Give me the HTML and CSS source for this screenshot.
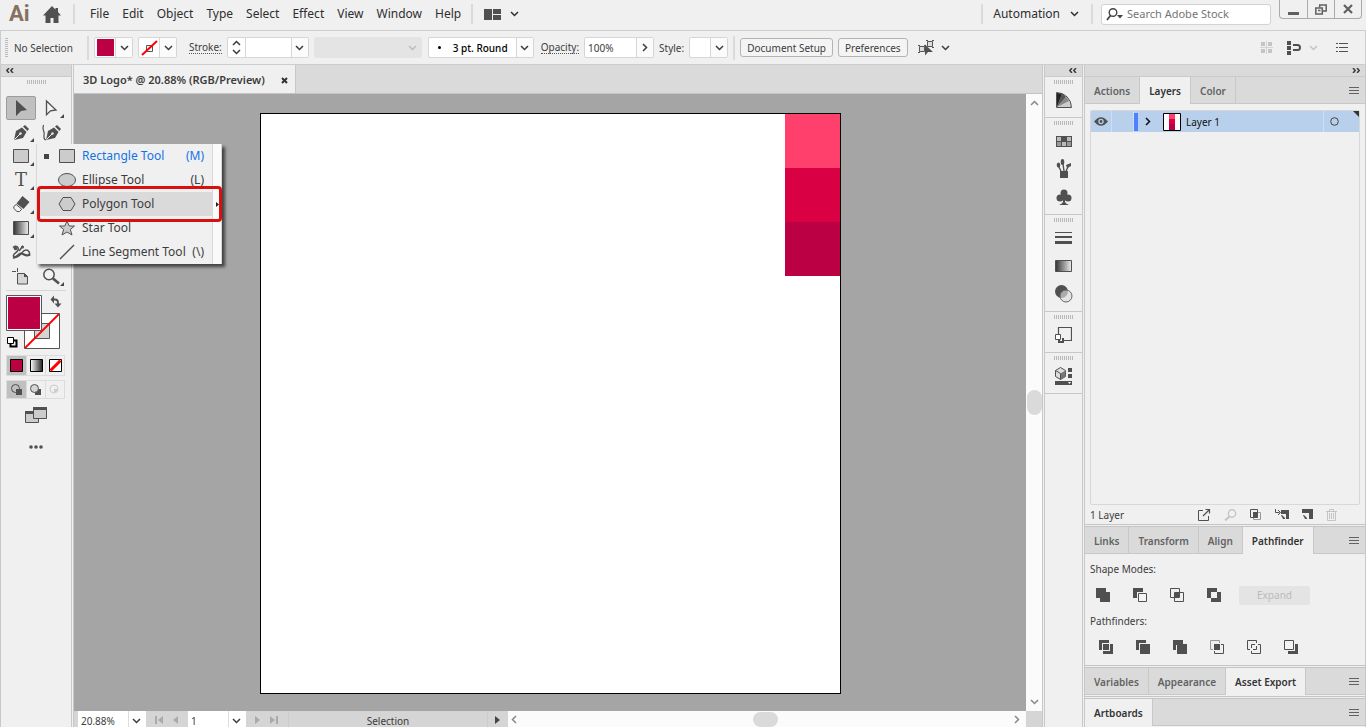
FILE: index.html
```html
<!DOCTYPE html>
<html lang="en">
<head>
<meta charset="utf-8">
<title>3D Logo</title>
<link rel="stylesheet" href="styles.css">
</head>
<body>
<svg class="defs" aria-hidden="true">
  <defs>
    <symbol id="down" viewBox="0 0 9 6"><path d="M1 1l3.500 3.500L8 1" fill="none" stroke="currentColor" stroke-width="1.500"/></symbol>
    <symbol id="up" viewBox="0 0 9 6"><path d="M1 5l3.500-3.500L8 5" fill="none" stroke="currentColor" stroke-width="1.500"/></symbol>
    <symbol id="right" viewBox="0 0 6 9"><path d="M1 1l3.500 3.500L1 8" fill="none" stroke="currentColor" stroke-width="1.500"/></symbol>
    <symbol id="left" viewBox="0 0 6 9"><path d="M5 1L1.500 4.500L5 8" fill="none" stroke="currentColor" stroke-width="1.500"/></symbol>
    <symbol id="fold" viewBox="0 0 8 5"><path d="M3 0L.8 2.500L3 5M7 0L4.800 2.500L7 5" fill="none" stroke="currentColor" stroke-width="1.500"/></symbol>
    <symbol id="lines" viewBox="0 0 10 8"><path d="M0 .5h10M0 3.500h10M0 6.500h10" stroke="currentColor"/></symbol>
    <linearGradient id="ramp"><stop offset="0" stop-color="#333"/><stop offset="1" stop-color="#eee"/></linearGradient>
    <linearGradient id="ramp2"><stop offset="0" stop-color="#fff"/><stop offset="1" stop-color="#222"/></linearGradient>
  </defs>
</svg>

<header class="menubar">
  <span class="brand">Ai</span>
  <button class="plain home" aria-label="Home"><svg width="18" height="17" viewBox="0 0 18 17"><path d="M9 0l3.500 3.500V2H15v4l3 3.500h-2.500V17h-5v-5h-3v5h-5V9.500H0z" fill="#505050"/></svg></button>
  <i class="sep"></i>
  <nav class="menus">
    <button class="plain">File</button><button class="plain">Edit</button><button class="plain">Object</button><button class="plain">Type</button><button class="plain">Select</button><button class="plain">Effect</button><button class="plain">View</button><button class="plain">Window</button><button class="plain">Help</button>
  </nav>
  <i class="sep"></i>
  <button class="plain workspace" aria-label="Arrange documents"><svg width="17" height="11"><path d="M0 0h8v11H0zM9 0h8v5H9zM9 6h8v5H9z" fill="#505050"/></svg><svg width="9" height="6"><use href="#down"/></svg></button>
  <span class="grow"></span>
  <i class="sep"></i>
  <button class="plain automation">Automation <svg width="9" height="6"><use href="#down"/></svg></button>
  <i class="sep"></i>
  <label class="search"><svg width="18" height="13"><circle cx="7" cy="4.500" r="3.800" fill="none" stroke="#444" stroke-width="1.400"/><path d="M4.500 7.500L1 12" stroke="#444" stroke-width="1.800"/><path d="M11 7h6l-3 3.500z" fill="#444"/></svg><input type="text" aria-label="Search Adobe Stock" placeholder="Search Adobe Stock"></label>
  <div class="winbtns">
    <button aria-label="Minimize"><svg width="11" height="11"><path d="M0 8h11v3H0z" fill="#606060"/></svg></button><button aria-label="Restore"><svg width="12" height="11" fill="none" stroke="#606060" stroke-width="1.500"><path d="M4.700 3.500V1h6.500v6H8"/><path d="M.8 4h6.500v6H.8z"/><path d="M3 6.500h2.500"/></svg></button><button aria-label="Close"><svg width="10" height="10"><path d="M1 1l8 8M9 1L1 9" stroke="#606060" stroke-width="2.200"/></svg></button>
  </div>
</header>

<section class="control">
  <i class="grip-v"></i>
  <span class="state">No Selection</span>
  <i class="sep"></i>
  <div class="combo"><button class="chip" aria-label="Fill"><i class="swatch"></i></button><button class="arrow" aria-label="Fill menu"><svg width="9" height="6"><use href="#down"/></svg></button></div>
  <div class="combo"><button class="chip" aria-label="Stroke"><svg width="19" height="18"><path d="M6.500 6.500h6v6h-6z" fill="#fff" stroke="#555"/><path d="M2 16L17 2" stroke="#f00" stroke-width="2"/></svg></button><button class="arrow" aria-label="Stroke menu"><svg width="9" height="6"><use href="#down"/></svg></button></div>
  <label class="link stroke-label" for="weight">Stroke:</label>
  <div class="combo weight"><button class="spin" aria-label="Step"><svg width="9" height="6"><use href="#up"/></svg><svg width="9" height="6"><use href="#down"/></svg></button><input id="weight" type="text"><button class="arrow" aria-label="Weights"><svg width="9" height="6"><use href="#down"/></svg></button></div>
  <button class="profile" disabled aria-label="Width profile"><svg width="9" height="6"><use href="#down"/></svg></button>
  <div class="combo brush"><button class="value"><i></i>3 pt. Round</button><button class="arrow" aria-label="Brushes"><svg width="9" height="6"><use href="#down"/></svg></button></div>
  <label class="link" for="opacity">Opacity:</label>
  <div class="combo opacity"><input id="opacity" type="text" value="100%"><button class="arrow" aria-label="Opacity slider"><svg width="6" height="9"><use href="#right"/></svg></button></div>
  <span class="style-label">Style:</span>
  <div class="combo"><button class="chip" aria-label="Style"></button><button class="arrow" aria-label="Styles"><svg width="9" height="6"><use href="#down"/></svg></button></div>
  <i class="sep near"></i>
  <button class="btn">Document Setup</button>
  <button class="btn prefs">Preferences</button>
  <button class="plain similar" aria-label="Select similar"><svg width="17" height="16"><g fill="#ddd" stroke="#555"><path d="M1.500 6.500h5v5h-5zM9.500 1.500h5v5h-5z"/></g><path d="M0 5.500h2M0 12.500h2M8 .5h2M14 .5h2M14 7.500h2M6 5.500h2" stroke="#555"/><path d="M7 4.500l8 7.500h-5l-3 3.500z" fill="#505050"/></svg><svg width="9" height="6"><use href="#down"/></svg></button>
  <span class="grow"></span>
  <button class="plain tail" aria-label="Align pixels"><svg width="14" height="14"><path d="M1 1h4v4H1zM8 1h4v4H8zM1 8h4v4H1zM8 8h4v4H8z" fill="#c4c4c4"/><path d="M6.500 0v13M0 6.500h13" stroke="#d4d4d4"/></svg></button>
  <button class="plain tail" aria-label="Snap"><svg width="15" height="14"><path d="M1 0h4v4H1zM1 5h4v4H1zM1 10h4v4H1z" fill="#505050"/><path d="M7 4h4.500a2.500 2.500 0 0 1 0 5H7" fill="none" stroke="#505050" stroke-width="2"/></svg></button>
  <button class="plain tail faint" aria-label="Snap options"><svg width="9" height="6"><use href="#down"/></svg></button>
  <button class="plain tail last" aria-label="Panel menu"><svg width="12" height="9"><path d="M0 .5h2M0 4.500h2M0 8.500h2M3 .5h9M3 4.500h9M3 8.500h9" stroke="#505050"/></svg></button>
</section>

<main class="work">
  <aside class="tools">
    <div class="strip left"><svg width="8" height="5"><use href="#fold"/></svg></div>
    <i class="grip"></i>
    <div class="toolgrid">
      <button class="tool on" aria-label="Selection"><svg width="14" height="19"><path d="M2 1l11 10-6 1-5 5z" fill="#505050"/></svg></button>
      <button class="tool more" aria-label="Direct selection"><svg width="14" height="19"><path d="M2.500 2l9.500 9-5.500.8-4 4z" fill="#f4f4f4" stroke="#505050" stroke-width="1.300"/></svg></button>
      <button class="tool more" aria-label="Pen"><svg width="17" height="17"><path d="M1 16l2-9 6-3.500 4.500 4.500-3.500 6z" fill="#505050"/><path d="M10 2.500L12 1l4 4-1.500 2z" fill="#505050"/><path d="M1.500 15.500L7 10" stroke="#eee"/><circle cx="7.500" cy="9.500" r="1.200" fill="#eee"/></svg></button>
      <button class="tool" aria-label="Curvature"><svg width="21" height="17"><path d="M5 16l2-9 6-3.500 4.500 4.500-3.500 6z" fill="#505050"/><path d="M14 2.500L16 1l4 4-1.500 2z" fill="#505050"/><path d="M5.500 15.500L11 10" stroke="#eee"/><circle cx="11.500" cy="9.500" r="1.200" fill="#eee"/><path d="M5 16C1 15 4 10 3 8S1 5 2.500 1" fill="none" stroke="#505050" stroke-width="1.200"/></svg></button>
      <button class="tool more" aria-label="Rectangle"><svg width="16" height="14"><path d="M.5.5h15v13H.5z" fill="#ccc" stroke="#505050"/></svg></button>
      <button class="tool" aria-label="Paintbrush"></button>
      <button class="tool more glyph" aria-label="Type">T</button>
      <button class="tool" aria-label="Rotate"></button>
      <button class="tool more" aria-label="Eraser"><svg width="17" height="17"><path d="M9.500 0l7 6-6 7-7-5.500z" fill="#505050"/><path d="M3.200 8.500l5.500 4.700L6.500 15.500H4L.8 12.500v-2z" fill="#f4f4f4" stroke="#505050"/></svg></button>
      <button class="tool" aria-label="Scale"></button>
      <button class="tool more" aria-label="Gradient"><svg width="16" height="14"><path d="M.5.5h15v13H.5z" fill="url(#ramp)" stroke="#505050"/></svg></button>
      <button class="tool" aria-label="Eyedropper"></button>
      <button class="tool" aria-label="Puppet warp"><svg width="19" height="14"><path d="M1 2.500C4 0 7 2 6 5S2 8 1.500 10.500 5 13 8 10s3-5 6-5 4 3 3.500 6" fill="none" stroke="#505050" stroke-width="1.500"/><path d="M1 12.500c4 1 5-4 8-4s5 4 8.500 1" fill="none" stroke="#505050" stroke-width="2.200"/><path d="M7 6l4-5" stroke="#505050" stroke-width="1.500"/><circle cx="3.500" cy="3.500" r="1.800" fill="#505050"/><circle cx="10.500" cy="2" r="1.500" fill="#505050"/></svg></button>
      <button class="tool" aria-label="Blend"></button>
      <button class="tool" aria-label="Artboard"><svg width="18" height="17"><path d="M0 3.500h4M5.500 0v4" stroke="#505050"/><path d="M5.500 5.500h7l3 3v7.500h-10z" fill="#d6d6d6" stroke="#505050"/><path d="M12 5v4h4z" fill="#505050"/></svg></button>
      <button class="tool more" aria-label="Zoom"><svg width="18" height="17"><circle cx="7" cy="6.500" r="5.200" fill="#f2f2f2" stroke="#505050" stroke-width="1.500"/><path d="M11 10.500l6 5" stroke="#505050" stroke-width="2.600"/></svg></button>
    </div>
    <hr class="rule">
    <div class="wells">
      <svg width="58" height="54" viewBox="0 0 58 54" role="img" aria-label="Fill and stroke">
        <path d="M18.500 18.500h35v35h-35z" fill="#fff" stroke="#555"/><path d="M28.500 28.500h15v15h-15z" fill="#d5d5d5" stroke="#555"/><path d="M19 53L53 19" stroke="#f00" stroke-width="1.800"/>
        <path d="M.5.5h35v35H.5z" fill="#fff" stroke="#555"/><path d="M2 2h32v32H2z" fill="#bb0043"/>
        <path d="M47 4.500h2q3 0 3 3V9" fill="none" stroke="#505050" stroke-width="1.800"/><path d="M48 .5v8l-3.500-4z M48.500 8.500h7L52 12.500z" fill="#505050"/>
        <path d="M4.500 45.500h6v6h-6z" fill="none" stroke="#000" stroke-width="2"/><path d="M1.500 42.500h6v6h-6z" fill="#fff" stroke="#000"/>
      </svg>
    </div>
    <div class="trio">
      <button class="on" aria-label="Color"><svg width="13" height="13"><path d="M.5.5h12v12H.5z" fill="#bb0043" stroke="#000"/></svg></button>
      <button aria-label="Gradient fill"><svg width="13" height="13"><path d="M.5.5h12v12H.5z" fill="url(#ramp2)" stroke="#000"/></svg></button>
      <button aria-label="None"><svg width="13" height="13"><path d="M.5.5h12v12H.5z" fill="#fff" stroke="#000"/><path d="M1.500 11.500l10-10" stroke="#f00" stroke-width="3"/></svg></button>
    </div>
    <div class="trio draw">
      <button class="on" aria-label="Draw normal"><svg width="12" height="12"><circle cx="4.500" cy="4.500" r="4" fill="none" stroke="#505050"/><path d="M5 5h6v6H5z" fill="#505050"/></svg></button>
      <button aria-label="Draw behind"><svg width="12" height="12"><path d="M5 5h6v6H5z" fill="#505050"/><circle cx="4.500" cy="4.500" r="4" fill="#d5d5d5" stroke="#505050"/></svg></button>
      <button aria-label="Draw inside"><svg width="12" height="12"><circle cx="5" cy="5" r="4" fill="none" stroke="#ccc"/><path d="M5 5h4l-2 3H5z" fill="#ccc"/></svg></button>
    </div>
    <button class="plain screen" aria-label="Screen mode"><svg width="22" height="16"><path d="M.5 5.500h13v10H.5z" fill="#ccc" stroke="#505050"/><path d="M0 4h14v3H0z" fill="#505050"/><path d="M8.500 1.500h13v10h-13z" fill="#ccc" stroke="#505050"/><path d="M8 0h14v3H8z" fill="#505050"/></svg></button>
    <button class="plain dots" aria-label="Edit toolbar"><svg width="14" height="4"><g fill="#505050"><circle cx="2" cy="2" r="1.800"/><circle cx="7" cy="2" r="1.800"/><circle cx="12" cy="2" r="1.800"/></g></svg></button>

    <div class="flyout">
      <div class="items">
        <button class="item current"><i class="mark"></i><svg width="18" height="14"><path d="M1.500.5h15v13h-15z" fill="#ccc" stroke="#505050"/></svg><span>Rectangle Tool</span><kbd>(M)</kbd></button>
        <button class="item"><i class="mark"></i><svg width="18" height="14"><ellipse cx="9" cy="7" rx="8.500" ry="6.500" fill="#ccc" stroke="#505050"/></svg><span>Ellipse Tool</span><kbd>(L)</kbd></button>
        <button class="item hover"><i class="mark"></i><svg width="18" height="14"><path d="M1 7l4-6.500h8L17 7l-4 6.500H5z" fill="#ccc" stroke="#505050"/></svg><span>Polygon Tool</span></button>
        <button class="item"><i class="mark"></i><svg width="18" height="16"><path d="M9 1l2.200 5H16.500l-4.200 3.500 1.700 5.500L9 12l-5 3 1.700-5.500L1.500 6h5.300z" fill="#ccc" stroke="#505050"/></svg><span>Star Tool</span></button>
        <button class="item"><i class="mark"></i><svg width="18" height="16"><path d="M2 15L16 1" stroke="#505050" stroke-width="1.400"/></svg><span>Line Segment Tool</span><kbd>(\)</kbd></button>
      </div>
      <div class="tear"><svg width="3" height="5"><path d="M0 0l3 2.500L0 5z" fill="#222"/></svg></div>
      <i class="frame"></i>
    </div>
  </aside>

  <section class="document">
    <div class="doctabs"><div class="doctab">3D Logo* @ 20.88% (RGB/Preview)<button class="plain" aria-label="Close tab"><svg width="7" height="7"><path d="M1 1l5 5M6 1L1 6" stroke="#333" stroke-width="2"/></svg></button></div></div>
    <div class="stage">
      <div class="canvas"><div class="artboard"><i class="c1"></i><i class="c2"></i><i class="c3"></i></div></div>
      <div class="vscroll"><svg width="9" height="6"><use href="#up"/></svg><i></i><svg width="9" height="6"><use href="#down"/></svg></div>
    </div>
    <div class="status">
      <div class="field zoom"><select aria-label="Zoom"><option>20.88%</option></select><svg width="9" height="6"><use href="#down"/></svg></div>
      <div class="pager"><svg width="8" height="8"><path d="M0 0h2v8H0zM8 0v8L3 4z" fill="#aaa"/></svg><svg width="5" height="8"><path d="M5 0v8L0 4z" fill="#aaa"/></svg></div>
      <div class="field page"><select aria-label="Artboard"><option>1</option></select><svg width="9" height="6"><use href="#down"/></svg></div>
      <div class="pager"><svg width="5" height="8"><path d="M0 0v8l5-4z" fill="#aaa"/></svg><svg width="8" height="8"><path d="M6 0h2v8H6zM0 0v8l5-4z" fill="#aaa"/></svg></div>
      <div class="mode">Selection</div>
      <button class="plain play" aria-label="Status menu"><svg width="5" height="8"><path d="M0 0v8l5-4z" fill="#444"/></svg></button>
      <div class="hscroll"><svg width="6" height="9"><use href="#left"/></svg><i></i><svg width="6" height="9"><use href="#right"/></svg></div>
      <div class="corner"></div>
    </div>
  </section>

  <aside class="dock">
    <div class="strip right"><svg width="8" height="5"><use href="#fold"/></svg></div>
    <div class="group"><i class="grip"></i>
      <button aria-label="Color guide"><svg width="16" height="16"><path d="M.5 15.500V.5a15 15 0 0 1 15 15z" fill="#ccc" stroke="#505050"/><path d="M1 15V1l5 1z" fill="#222"/><path d="M1 15L6 1.500 10 5z" fill="#555"/><path d="M1 15l9-10 3 4z" fill="#888"/></svg></button></div>
    <div class="group"><i class="grip"></i>
      <button aria-label="Swatches"><svg width="16" height="11"><path d="M0 0h16v11H0z" fill="#505050"/><path d="M1 1h4v4H1zM11 1h4v4h-4zM6 6h4v4H6z" fill="#bbb"/><path d="M1 6h4v4H1zM11 6h4v4h-4z" fill="#999"/></svg></button>
      <button aria-label="Brushes"><svg width="16" height="20"><path d="M4 12h8v7H4z" fill="#505050"/><path d="M5 12L2.500 7M8 12L7 5M10 12l3-6" stroke="#505050" stroke-width="1.400"/><ellipse cx="2.500" cy="6" rx="1.800" ry="2.600" fill="#505050"/><ellipse cx="6.500" cy="3" rx="1.800" ry="3" fill="#505050"/><path d="M10 6l5-2v3l-4 2z" fill="#505050"/></svg></button>
      <button aria-label="Symbols"><svg width="16" height="17"><g fill="#505050"><circle cx="8" cy="4" r="3.500"/><circle cx="4" cy="9" r="3.500"/><circle cx="12" cy="9" r="3.500"/><path d="M7 7h2v6q1 2 4 3H3q3-1 4-3z"/></g></svg></button></div>
    <div class="group"><i class="grip"></i>
      <button aria-label="Stroke"><svg width="17" height="12"><path d="M0 0h17v1H0zM0 4h17v2H0zM0 9h17v3H0z" fill="#505050"/></svg></button>
      <button aria-label="Gradient"><svg width="17" height="12"><path d="M.5.5h16v11H.5z" fill="url(#ramp)" stroke="#505050"/></svg></button>
      <button aria-label="Transparency"><svg width="18" height="18"><circle cx="6.500" cy="6.500" r="6.500" fill="#505050"/><circle cx="11" cy="11" r="6" fill="#ddd" fill-opacity=".65" stroke="#666"/></svg></button></div>
    <div class="group"><i class="grip"></i>
      <button aria-label="Asset export"><svg width="17" height="16"><path d="M3.500 7V.5h13v13H9" fill="none" stroke="#505050" stroke-width="1.200"/><path d="M4 11v4h4v-4" fill="none" stroke="#505050" stroke-width="2"/><path d="M.5 7.500h5v5h-5z" fill="#fff" stroke="#505050"/></svg></button></div>
    <div class="group"><i class="grip"></i>
      <button aria-label="Properties"><svg width="17" height="18"><path d="M.5 3.500L5.500.5l5 3v6l-5 3-5-3z" fill="#ddd" stroke="#505050"/><path d="M5.500 6.500l5-3v6l-5 3z" fill="#777"/><path d="M.5 3.500l5 3v6" fill="none" stroke="#505050"/><path d="M13 1h4v4h-4zM13 7h4v4h-4zM0 14h17v4H0z" fill="#505050"/><path d="M13 15h3l-1.500 2z" fill="#fff"/></svg></button></div>
  </aside>

  <aside class="panels">
    <div class="strip right flip"><svg width="8" height="5"><use href="#fold"/></svg></div>
    <section class="panel layers">
      <div class="tabs"><button>Actions</button><button class="on">Layers</button><button>Color</button><span class="fill"></span><svg width="10" height="8"><use href="#lines"/></svg></div>
      <div class="list">
        <div class="layer">
          <span class="eye"><svg width="14" height="9"><path d="M0 4.500Q7-4 14 4.500Q7 13 0 4.500z" fill="#505050"/><circle cx="7" cy="4.500" r="2.700" fill="#b9d0ec"/><circle cx="7" cy="4.500" r="1.400" fill="#505050"/></svg></span>
          <span class="lock"></span><i class="bar"></i>
          <svg class="open" width="6" height="9"><use href="#right"/></svg>
          <svg width="18" height="18"><path d="M.5.5h17v17H.5z" fill="#fff" stroke="#000"/><path d="M6 1h6v5H6z" fill="#ff406d"/><path d="M6 6h6v5H6z" fill="#d90043"/><path d="M6 11h6v6H6z" fill="#bb0043"/></svg>
          <span class="name">Layer 1</span>
          <span class="target"><svg width="9" height="9"><circle cx="4.500" cy="4.500" r="3.800" fill="none" stroke="#444"/></svg></span>
          <svg class="flag" width="6" height="6"><path d="M0 0h6v6z" fill="#333"/></svg>
        </div>
      </div>
      <div class="foot"><span>1 Layer</span>
        <button class="plain" aria-label="Collect for export"><svg width="13" height="12"><path d="M5 1.500H.5v10h10V7" fill="none" stroke="#505050"/><path d="M5 7l6-6M7.500.5h4v4" fill="none" stroke="#505050" stroke-width="1.200"/></svg></button>
        <button class="plain" aria-label="Locate object"><svg width="13" height="12"><circle cx="8" cy="4.500" r="3.700" fill="none" stroke="#c4c4c4" stroke-width="1.400"/><path d="M5.500 7.500L1 11.500" stroke="#c4c4c4" stroke-width="2"/></svg></button>
        <button class="plain" aria-label="Clipping mask"><svg width="12" height="12"><path d="M3.500 3.500h7v7h-7z" fill="none" stroke="#999"/><path d="M.5.5h7v8h-7z" fill="none" stroke="#505050"/><path d="M3 3h5v5H3z" fill="#505050"/></svg></button>
        <button class="plain" aria-label="New sublayer"><svg width="14" height="11"><path d="M6 1h8v9h-3V5H6z" fill="#505050"/><path d="M.5 0v3.500h4M3 1l2.500 2.500L3 6" fill="none" stroke="#505050"/><path d="M6 6h1l3 3v1H8z" fill="#505050"/></svg></button>
        <button class="plain" aria-label="New layer"><svg width="11" height="11"><path d="M0 0h11v10H7V4H0z" fill="#505050"/><path d="M1 6h1l3 3v1H3z" fill="#505050"/></svg></button>
        <button class="plain" aria-label="Delete"><svg width="11" height="12"><path d="M0 2.500h11M3.500 2V.5h4V2M1.500 3v8.500h8V3M3.500 4v6M5.500 4v6M7.500 4v6" fill="none" stroke="#c4c4c4"/></svg></button>
      </div>
    </section>
    <section class="panel">
      <div class="tabs"><button>Links</button><button>Transform</button><button>Align</button><button class="on">Pathfinder</button><span class="fill"></span><svg width="10" height="8"><use href="#lines"/></svg></div>
      <div class="path">
        <h3>Shape Modes:</h3>
        <div class="ops">
          <button class="plain" aria-label="Unite"><svg width="14" height="14"><path d="M0 0h10v4h4v10H4v-4H0z" fill="#505050"/></svg></button>
          <button class="plain" aria-label="Minus front"><svg width="14" height="14"><path d="M0 0h10v4H4v6H0z" fill="#505050"/><path d="M5.500 5.500h8v8h-8z" fill="#f4f4f4" stroke="#505050"/></svg></button>
          <button class="plain" aria-label="Intersect"><svg width="14" height="14"><path d="M.5.5h9v9h-9zM4.500 4.500h9v9h-9z" fill="none" stroke="#505050"/><path d="M5 5h4v4H5z" fill="#505050"/></svg></button>
          <button class="plain" aria-label="Exclude"><svg width="14" height="14"><path d="M0 0h10v4h4v10H4v-4H0zM4 4v6h6V4z" fill="#505050" fill-rule="evenodd"/></svg></button>
          <button class="expand" disabled>Expand</button>
        </div>
        <h3>Pathfinders:</h3>
        <div class="ops second">
          <button class="plain" aria-label="Divide"><svg width="14" height="14"><path d="M0 0h10v3H3v7H0zM4 4h6v6H4zM11 4h3v10H4v-3h7z" fill="#505050"/></svg></button>
          <button class="plain" aria-label="Trim"><svg width="14" height="14"><path d="M0 0h10v3H3v7H0zM4 4h10v10H4z" fill="#505050"/></svg></button>
          <button class="plain" aria-label="Merge"><svg width="14" height="14"><path d="M0 0h10v4h4v10H4V5H3v5H0z" fill="#505050"/></svg></button>
          <button class="plain" aria-label="Crop"><svg width="14" height="14"><path d="M3 9.500H.5v-9h9V3" fill="none" stroke="#999"/><path d="M11 4.500h2.500v9h-9V11" fill="none" stroke="#505050"/><path d="M4 4h6v6H4z" fill="#505050"/></svg></button>
          <button class="plain" aria-label="Outline"><svg width="14" height="14"><path d="M3 9.500H.5v-9h9V3M11 4.500h2.500v9h-9V11M4.500 8V4.500H8M9.500 6v3.500H6" fill="none" stroke="#505050"/></svg></button>
          <button class="plain" aria-label="Minus back"><svg width="14" height="14"><path d="M11 4h3v10H4v-3h7z" fill="#505050"/><path d="M.5.5h9v9h-9z" fill="#f4f4f4" stroke="#505050"/></svg></button>
        </div>
      </div>
    </section>
    <section class="panel short">
      <div class="tabs"><button>Variables</button><button>Appearance</button><button class="on">Asset Export</button><span class="fill"></span><svg width="10" height="8"><use href="#lines"/></svg></div>
    </section>
    <section class="panel short">
      <div class="tabs"><button class="on">Artboards</button><span class="fill"></span><svg width="10" height="8"><use href="#lines"/></svg></div>
    </section>
  </aside>
</main>
</body>
</html>
```
FILE: styles.css
```css
* { box-sizing: border-box; }
html, body { height: 100%; }
body {
  margin: 0;
  display: flex;
  flex-direction: column;
  overflow: hidden;
  background: #f0f0f0;
  color: #3c3c3c;
  font: 10px/14px "Noto Sans", "Open Sans", sans-serif;
}
button, input, select { font: inherit; color: inherit; margin: 0; padding: 0; border: 0; background: none; border-radius: 0; outline: 0; }
svg { display: block; flex: none; }
.defs { position: absolute; width: 0; height: 0; }
.plain { display: flex; align-items: center; }
.grow { flex: 1; }
.sep { width: 2px; height: 20px; background: #dadada; flex: none; }

/* menu bar */
.menubar { display: flex; align-items: center; height: 31px; flex: none; border-bottom: 1px solid #cdcdcd; padding: 0 0 2px 9px; font-size: 12px; color: #2e2e2e; white-space: nowrap; }
.brand { width: 34px; font: bold 22px/24px "Liberation Sans Narrow", Roboto, sans-serif; color: #86705f; }
.home { width: 30px; }
.menus { display: flex; gap: 13px; padding: 0 10px 0 15px; }
.workspace { gap: 9px; padding-left: 11px; }
.automation { gap: 10px; padding: 0 12px 0 10px; }
.search { display: flex; align-items: center; gap: 3px; width: 170px; height: 21px; margin: 0 8px; padding-left: 4px; background: #fff; border: 1px solid #d2d2d2; border-radius: 3px; font-size: 11px; }
.search input { flex: 1; min-width: 0; }
.search input::placeholder { color: #757575; opacity: 1; }
.winbtns { display: flex; align-self: flex-start; height: 19px; margin-right: 4px; border: 1px solid #aaa; border-top: 0; border-radius: 0 0 4px 4px; }
.winbtns button { width: 27px; display: grid; place-items: center; }
.winbtns button + button { border-left: 1px solid #aaa; }

/* control bar */
.control { display: flex; align-items: center; height: 34px; flex: none; border: solid #cdcdcd; border-width: 0 1px 1px; padding-left: 4px; white-space: nowrap; }
.control > .sep { height: 24px; margin-right: 5px; }
.grip-v { width: 3px; height: 19px; background: repeating-linear-gradient(#bbb 0 1px, transparent 1px 2px); }
.state { width: 79px; padding-left: 6px; }
.combo { display: flex; height: 21px; margin-right: 5px; background: #fff; border: 1px solid #d6d6d6; border-radius: 2px; flex: none; }
.chip { width: 20px; display: grid; place-items: center; }
.swatch { width: 17px; height: 17px; background: #bb0043; }
.arrow { width: 17px; display: grid; place-items: center; border-left: 1px solid #d6d6d6; background: #fbfbfb; }
.link { border-bottom: 1px dotted #555; line-height: 12px; margin: 0 5px 0 2px; }
.stroke-label { margin-left: 7px; }
.spin { width: 18px; display: flex; flex-direction: column; justify-content: space-around; align-items: center; border-right: 1px solid #d6d6d6; }
.weight { width: 82px; }
.combo input { flex: 1; min-width: 0; }
.profile { width: 108px; height: 21px; margin-right: 6px; padding-right: 5px; display: flex; align-items: center; justify-content: flex-end; background: #e4e4e4; color: #bdbdbd; border-radius: 2px; }
.brush { width: 106px; }
.brush .value { flex: 1; display: flex; align-items: center; padding-left: 9px; color: #000; font-weight: 500; }
.brush i { width: 3px; height: 3px; margin-right: 12px; border-radius: 50%; background: #000; }
.opacity { width: 70px; }
.opacity input { padding-left: 3px; }
.style-label { margin-right: 5px; }
.btn { height: 19px; padding: 0 6px; margin-right: 5px; border: 1px solid #b4b4b4; border-radius: 3px; background: #f4f4f4; }
.similar { gap: 6px; margin-left: 5px; }
.tail { margin-right: 12px; }
.faint { color: #c4c4c4; margin: 0 18px 0 -4px; }
.last { margin-right: 17px; }

/* work area */
.work { flex: 1; display: flex; min-height: 0; }
.strip { display: flex; align-items: center; height: 12px; flex: none; padding: 0 5px; background: #dadada; border-bottom: 1px solid #cacaca; }
.strip.right { justify-content: flex-end; }
.strip.flip svg { transform: scaleX(-1); }
.grip { display: block; width: 19px; height: 4px; margin: 3px auto 0; background: repeating-linear-gradient(90deg, #b8b8b8 0 1px, transparent 1px 2px); }

/* tools */
.tools { position: relative; width: 74px; flex: none; border-left: 1px solid #c8c8c8; border-right: 3px double #c8c8c8; }
.toolgrid { display: grid; grid-template-columns: 30px 30px; grid-auto-rows: 24px; margin: 12px 0 0 5px; }
.tool { position: relative; display: grid; place-items: center; }
.tool.on { background: #c0c0c0; border: 1px solid #9c9c9c; border-radius: 2px; }
.tool.more::after { content: ""; position: absolute; right: 2px; bottom: 2px; border: 2px solid transparent; border-right-color: #444; border-bottom-color: #444; }
.glyph { font: 18px/22px "DejaVu Serif", serif; color: #505050; }
.rule { height: 1px; margin: 2px 5px 4px; border: 0; background: #d6d6d6; }
.wells { margin-left: 5px; }
.trio { display: grid; grid-template-columns: repeat(3, 1fr); width: 59px; height: 21px; margin: 6px 0 0 5px; border: 1px solid #dcdcdc; }
.trio.draw { height: 19px; margin-top: 4px; }
.trio button { display: grid; place-items: center; }
.trio button + button { border-left: 1px solid #dcdcdc; }
.trio .on { background: #c0c0c0; }
.screen { margin: 8px 0 0 24px; }
.dots { margin: 22px 0 0 28px; }
.flyout { position: absolute; z-index: 2; left: 35px; top: 79px; width: 186px; display: flex; background: #f0f0f0; border: solid #d8d8d8; border-width: 0 1px; box-shadow: 3px 3px 3px rgba(0, 0, 0, .6); font-size: 12px; }
.items { flex: 1; }
.item { display: flex; align-items: center; width: 100%; height: 24px; padding: 0 8px 0 7px; white-space: nowrap; }
.item svg { margin: 0 6px 0 9px; }
.item span { flex: 1; text-align: left; }
.item kbd { font: inherit; }
.mark { width: 5px; height: 5px; }
.current { color: #1473e6; }
.current .mark { background: #444; }
.hover { background: #dadada; }
.tear { width: 9px; display: grid; place-items: center; background: #fafafa; border-left: 1px solid #d8d8d8; }
.frame { position: absolute; inset: 42px -1px 42px 0; border: 3px solid #d91010; border-radius: 4px; }

/* document */
.document { flex: 1; min-width: 0; display: flex; flex-direction: column; }
.doctabs { display: flex; height: 29px; flex: none; background: #dadada; border-bottom: 1px solid #c4c4c4; }
.doctab { display: flex; align-items: center; gap: 16px; padding: 2px 7px 0 9px; background: #f0f0f0; border-right: 1px solid #c8c8c8; font-weight: 600; font-size: 11px; }
.stage { flex: 1; display: flex; min-height: 0; }
.canvas { flex: 1; display: grid; place-items: center; padding-top: 2px; background: #a5a5a5; }
.artboard { height: calc(100% - 34px); aspect-ratio: 1; display: flex; flex-direction: column; align-items: flex-end; background: #fff; border: 1px solid #000; }
.artboard i { width: 55px; height: 54px; }
.c1 { background: #ff406d; }
.c2 { background: #d90043; }
.c3 { background: #bb0043; }
.vscroll { width: 16px; display: flex; flex-direction: column; align-items: center; justify-content: space-between; padding: 6px 0; background: #fbfbfb; color: #888; }
.vscroll i { width: 15px; height: 25px; border-radius: 8px; background: #dadada; }
.status { display: flex; height: 16px; flex: none; padding-left: 4px; background: #d5d5d5; overflow: hidden; }
.field { position: relative; display: flex; background: #fff; height: 18px; }
.field select { width: 100%; appearance: none; padding: 2px 3px 0; }
.field svg { position: absolute; right: 5px; top: 7px; }
.field::after { content: ""; position: absolute; right: 17px; top: 0; bottom: 0; width: 1px; background: #ddd; }
.zoom { width: 68px; }
.page { width: 58px; }
.pager { display: flex; gap: 10px; width: 42px; padding: 5px 0 0 9px; }
.mode { flex: 0 0 200px; padding-top: 3px; text-align: center; border: solid #ccc; border-width: 0 1px; }
.play { padding: 2px 8px 0 7px; }
.hscroll { flex: 1; display: flex; align-items: center; justify-content: space-between; padding: 0 6px 0 3px; background: #fbfbfb; color: #888; }
.hscroll i { width: 25px; height: 15px; border-radius: 8px; background: #dadada; }
.corner { width: 16px; }

/* icon dock */
.dock { width: 43px; flex: none; border-left: 3px double #c8c8c8; border-right: 3px double #c8c8c8; }
.group { padding: 1px 0 3px; border-bottom: 1px solid #c8c8c8; }
.group .grip { margin: 2px auto; }
.group button { display: grid; place-items: center; width: 100%; height: 28px; }

/* panels */
.panels { width: 281px; flex: none; display: flex; flex-direction: column; border-right: 1px solid #c8c8c8; }
.panel { border-bottom: 3px double #c4c4c4; }
.layers { flex: 1; display: flex; flex-direction: column; min-height: 0; }
.panel.short { padding-bottom: 1px; }
.panel:last-child { border-bottom: 0; }
.tabs { display: flex; align-items: center; height: 27px; flex: none; background: #dadada; box-shadow: inset 0 -1px #c8c8c8; padding-right: 6px; color: #626262; font-weight: 600; }
.tabs button { align-self: stretch; padding: 0 9px; border-right: 1px solid #c8c8c8; }
.tabs .on { background: #f0f0f0; color: #333; }
.fill { flex: 1; }
.list { flex: 1; margin: 6px 5px 0; border: 1px solid #d8d8d8; border-radius: 2px; }
.layer { position: relative; display: flex; align-items: center; height: 21px; background: #b9d0ec; color: #111; }
.eye, .lock { display: grid; place-items: center; width: 21px; height: 100%; border-right: 1px solid #cfdff3; }
.lock { width: 22px; }
.bar { width: 4px; height: 18px; background: #4f80ff; }
.open { margin: 0 12px 0 7px; }
.name { flex: 1; padding-left: 5px; }
.target { display: grid; place-items: center; width: 36px; height: 100%; padding-right: 14px; border-left: 1px solid #cfdff3; }
.flag { position: absolute; right: 0; top: 0; }
.foot { display: flex; align-items: center; gap: 13px; height: 19px; padding: 0 28px 0 5px; }
.foot span { flex: 1; }
.path { padding: 8px 5px 0; }
.path h3 { margin: 0; font: inherit; }
.ops { display: flex; align-items: center; gap: 23px; height: 38px; padding-left: 6px; }
.ops.second { padding-left: 9px; height: 37px; }
.expand { width: 71px; height: 19px; margin-left: -5px; background: #e4e4e4; color: #bbb; border-radius: 2px; }
```
